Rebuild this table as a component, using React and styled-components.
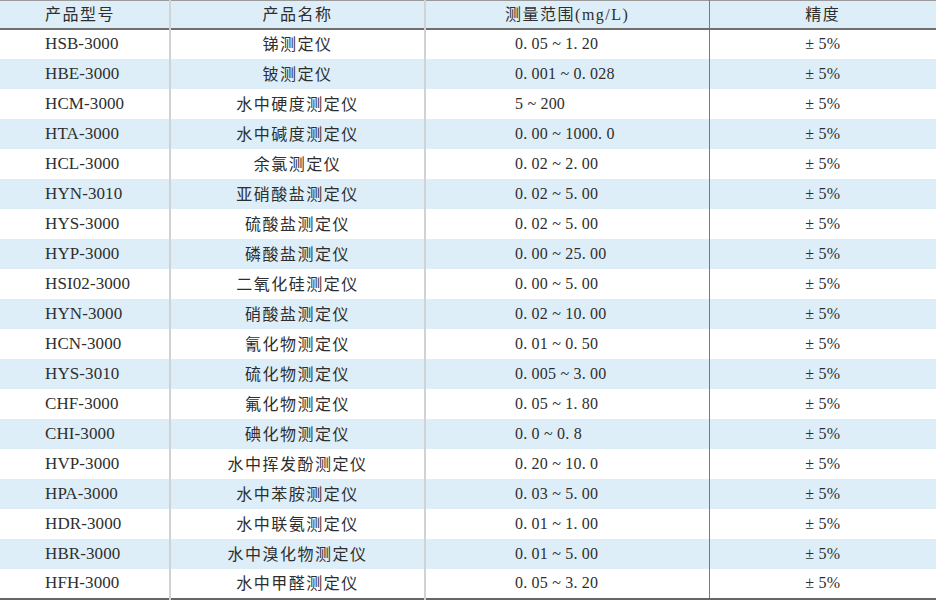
import React from 'react'
import styled, { createGlobalStyle } from 'styled-components'

const GlobalStyle = createGlobalStyle`
  html, body {
    margin: 0;
    padding: 0;
    background: #fff;
  }
`

const rows = [
  ['HSB-3000', '锑测定仪', '0.05~1.20'],
  ['HBE-3000', '铍测定仪', '0.001~0.028'],
  ['HCM-3000', '水中硬度测定仪', '5~200'],
  ['HTA-3000', '水中碱度测定仪', '0.00~1000.0'],
  ['HCL-3000', '余氯测定仪', '0.02~2.00'],
  ['HYN-3010', '亚硝酸盐测定仪', '0.02~5.00'],
  ['HYS-3000', '硫酸盐测定仪', '0.02~5.00'],
  ['HYP-3000', '磷酸盐测定仪', '0.00~25.00'],
  ['HSI02-3000', '二氧化硅测定仪', '0.00~5.00'],
  ['HYN-3000', '硝酸盐测定仪', '0.02~10.00'],
  ['HCN-3000', '氰化物测定仪', '0.01~0.50'],
  ['HYS-3010', '硫化物测定仪', '0.005~3.00'],
  ['CHF-3000', '氟化物测定仪', '0.05~1.80'],
  ['CHI-3000', '碘化物测定仪', '0.0~0.8'],
  ['HVP-3000', '水中挥发酚测定仪', '0.20~10.0'],
  ['HPA-3000', '水中苯胺测定仪', '0.03~5.00'],
  ['HDR-3000', '水中联氨测定仪', '0.01~1.00'],
  ['HBR-3000', '水中溴化物测定仪', '0.01~5.00'],
  ['HFH-3000', '水中甲醛测定仪', '0.05~3.20'],
]

// the source renders ranges with wide dots and a spaced tilde
const spaced = range => range.replace(/\./g, '. ').replace('~', ' ~ ')

const Table = styled.table`
  width: 936px;
  border-collapse: collapse;
  table-layout: fixed;
  color: #2e2e2e;
  border-top: 1px solid #9a9a9a;
  border-bottom: 2px solid #666;
`

const HeadRow = styled.tr`
  background: #ddeef9;
  border-bottom: 2px solid #6f6f6f;
`

const Row = styled.tr`
  background: ${p => (p.$striped ? '#ddeef9' : '#fff')};
`

const fonts = {
  cjk: { family: '"Liberation Serif", "Noto Sans CJK SC", serif', size: 16, spacing: 1.5, lift: 2 },
  model: { family: '"Liberation Serif", "Noto Sans CJK SC", serif', size: 17, spacing: 0.1, lift: 0 },
  range: { family: '"Liberation Serif", "Noto Sans CJK SC", serif', size: 16, spacing: 0.2, lift: 0 },
}

const Cell = styled.td`
  height: 30px;
  padding: 0 0 ${p => fonts[p.$font || 'cjk'].lift}px ${p => p.$pad || 0}px;
  box-sizing: border-box;
  text-align: ${p => p.$align || 'center'};
  vertical-align: middle;
  white-space: pre;
  border-right: ${p => p.$divider || 'none'};
  font-family: ${p => fonts[p.$font || 'cjk'].family};
  font-size: ${p => fonts[p.$font || 'cjk'].size}px;
  letter-spacing: ${p => fonts[p.$font || 'cjk'].spacing}px;
`

const HeadCell = styled(Cell).attrs({ as: 'th' })`
  height: 28px;
  font-weight: normal;
`

const light = '2px solid #cfd3d6'
const dark = '1px solid #7a7a7a'

export default function App() {
  return (
    <>
      <GlobalStyle />
      <Table>
        <colgroup>
          <col style={{ width: 170 }} />
          <col style={{ width: 255 }} />
          <col style={{ width: 284 }} />
          <col style={{ width: 227 }} />
        </colgroup>
        <thead>
          <HeadRow>
            <HeadCell $align="left" $pad={45} $divider={light}>产品型号</HeadCell>
            <HeadCell $divider={light}>产品名称</HeadCell>
            <HeadCell $divider={dark}>测量范围(mg/L)</HeadCell>
            <HeadCell>精度</HeadCell>
          </HeadRow>
        </thead>
        <tbody>
          {rows.map(([model, name, range], i) => (
            <Row key={model + i} $striped={i % 2 === 1}>
              <Cell $font="model" $align="left" $pad={45} $divider={light}>{model}</Cell>
              <Cell $divider={light}>{name}</Cell>
              <Cell $font="range" $align="left" $pad={89} $divider={dark}>{spaced(range)}</Cell>
              <Cell $font="range">± 5%</Cell>
            </Row>
          ))}
        </tbody>
      </Table>
    </>
  )
}
